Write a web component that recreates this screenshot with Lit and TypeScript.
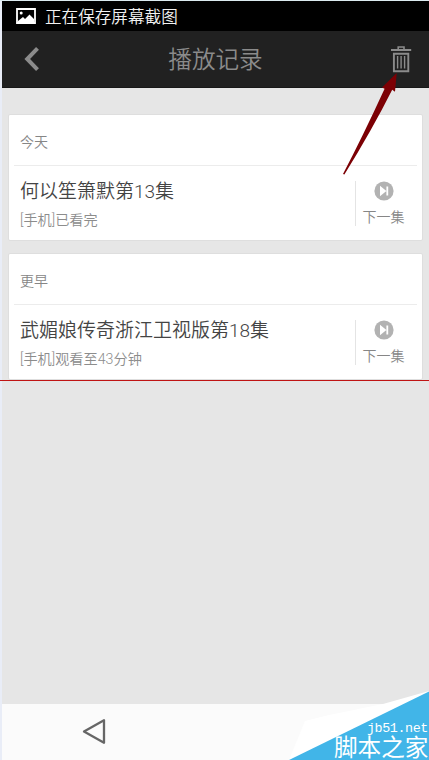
import { LitElement, html, css } from "lit";
import { customElement, property } from "lit/decorators.js";

@customElement("history-card")
class HistoryCard extends LitElement {
  @property() day = "";
  @property() name = "";
  @property() progress = "";

  static styles = css`
    :host {
      display: block;
      box-sizing: border-box;
      height: 127px;
      padding: 0 5px;
      background: #fff;
      border: 1px solid #dedede;
      border-radius: 2px;
    }
    .day {
      box-sizing: border-box;
      height: 51px;
      padding: 17px 6px 0;
      border-bottom: 1px solid #ececec;
      font-size: 14px;
      line-height: 20px;
      color: #868686;
    }
    .row { display: flex; justify-content: space-between; }
    .info { padding: 12px 0 0 6px; white-space: nowrap; }
    .name { font-size: 19px; line-height: 28px; color: #444; }
    .progress { margin-top: 4px; font-size: 14.2px; line-height: 20px; color: #8c8c8c; }
    .next {
      box-sizing: border-box;
      width: 62px;
      height: 45px;
      margin-top: 15px;
      border-left: 1px solid #e4e4e4;
      padding-right: 6px;
      display: flex;
      flex-direction: column;
      align-items: center;
      font-size: 14px;
      line-height: 20px;
      color: #868686;
    }
    .next svg { display: block; margin-bottom: 6px; flex: none; }
  `;

  render() {
    return html`
      <div class="day">${this.day}</div>
      <div class="row">
        <div class="info">
          <div class="name">${this.name}</div>
          <div class="progress">${this.progress}</div>
        </div>
        <div class="next">
          <svg width="20" height="20" viewBox="0 0 20 20">
            <circle cx="10" cy="10" r="9.6" fill="#b2b2b2" />
            <path d="M6 4.8L12.4 10L6 15.2zM12.4 5.4h1.8v9.2h-1.8z" fill="#fff" />
          </svg>
          <span>下一集</span>
        </div>
      </div>
    `;
  }
}

@customElement("app-root")
class AppRoot extends LitElement {
  static styles = css`
    :host {
      display: block;
      position: relative;
      box-sizing: border-box;
      width: 429px;
      height: 760px;
      padding: 1px 0 0 2px;
      overflow: hidden;
      background: linear-gradient(#dcebf0 1px, #e9edf7 1px);
      font-family: Roboto, "Noto Sans CJK SC", sans-serif;
      font-weight: 350;
    }
    .screen { height: 759px; display: flex; flex-direction: column; background: #e6e6e6; }
    .status {
      height: 30px;
      display: flex;
      align-items: center;
      gap: 9px;
      padding-left: 14px;
      background: #000;
      color: #f2f2f2;
      font-size: 16.6px;
    }
    .header {
      box-sizing: border-box;
      height: 57px;
      display: grid;
      grid-template-columns: 60px 1fr 60px;
      align-items: center;
      background: #212121;
      border-bottom: 1px solid #181818;
      color: #8b8b8b;
    }
    .header svg { display: block; }
    .back { padding-left: 22px; }
    .trash { padding-left: 20px; }
    .title { text-align: center; font-size: 23.6px; line-height: 34px; padding-top: 1px; }
    .list {
      flex: none;
      height: 293px;
      box-sizing: border-box;
      padding: 26px 6px 0;
      overflow: hidden;
      border-bottom: 1px solid #c01414;
      display: flex;
      flex-direction: column;
      gap: 12px;
    }
    .list history-card { flex: none; }
    .rest { flex: 1; }
    .nav { height: 56px; background: #fbfbfb; }
    .nav svg { display: block; margin: 14px 0 0 79px; }
    .edge { position: absolute; left: 0; top: 380px; width: 2px; height: 1px; background: #c01414; }
    .arrow { position: absolute; left: 340px; top: 70px; }
    .mark { position: absolute; left: 279px; top: 680px; width: 150px; height: 80px; }
    .mark svg { display: block; }
    .site, .brand { position: absolute; color: #fff; white-space: nowrap; }
    .site {
      right: 1px;
      top: 42px;
      font: 400 13.4px/14px "Liberation Mono", monospace;
      letter-spacing: -0.4px;
    }
    .brand {
      left: 55px;
      top: 57px;
      font-size: 23.6px;
      line-height: 22px;
      font-weight: 400;
    }
  `;

  render() {
    return html`
      <div class="screen">
        <div class="status">
          <svg width="20" height="16" viewBox="0 0 20 16">
            <path d="M1 1h18v14H1z" fill="none" stroke="#fff" stroke-width="1.8" />
            <path d="M2 15v-2l5-4 2 2 4.5-4.5L18 11v4z" fill="#fff" />
            <circle cx="5.2" cy="5" r="1.5" fill="#fff" />
          </svg>
          <span>正在保存屏幕截图</span>
        </div>
        <div class="header">
          <div class="back">
            <svg width="16" height="26" viewBox="0 0 16 26">
              <path d="M13.5 2.4L3.2 13l10.3 10.6" fill="none" stroke="#8b8b8b" stroke-width="4" />
            </svg>
          </div>
          <div class="title">播放记录</div>
          <div class="trash">
            <svg width="24" height="28" viewBox="0 0 24 28" fill="none" stroke="#8b8b8b">
              <path d="M2 5h20.2" stroke-width="2" />
              <path d="M9.2 5V2h5.8v3" stroke-width="1.6" />
              <path d="M4.9 8.8h14.4v17.5H4.9z" stroke-width="1.9" />
              <path d="M8.6 11v12.4M12.1 11v12.4M15.6 11v12.4" stroke-width="1.4" />
            </svg>
          </div>
        </div>
        <div class="list">
          <history-card day="今天" name="何以笙箫默第13集" progress="[手机]已看完"></history-card>
          <history-card day="更早" name="武媚娘传奇浙江卫视版第18集" progress="[手机]观看至43分钟"></history-card>
        </div>
        <div class="rest"></div>
        <div class="nav">
          <svg width="26" height="28" viewBox="0 0 26 28">
            <path d="M3 13.5L23 2.2v22.6z" fill="none" stroke="#666" stroke-width="2.3" stroke-linejoin="round" />
          </svg>
        </div>
      </div>
      <div class="edge"></div>
      <svg class="arrow" width="62" height="108" viewBox="0 0 62 108">
        <path d="M56.7 3L55 21.8L52.2 19.8Q32 60 4.4 104.6L3 104Q22 68 44.6 18.8L42 17.6Z" fill="#7c0004" />
      </svg>
      <div class="mark">
        <svg width="150" height="80" viewBox="0 0 150 80">
          <path d="M150 11L104 24L50 35L26 41L10 80H150z" fill="#fff" />
          <path d="M150 11.5V80H10z" fill="#41b5e8" />
        </svg>
        <span class="site">jb51.net</span>
        <span class="brand">脚本之家</span>
      </div>
    `;
  }
}
